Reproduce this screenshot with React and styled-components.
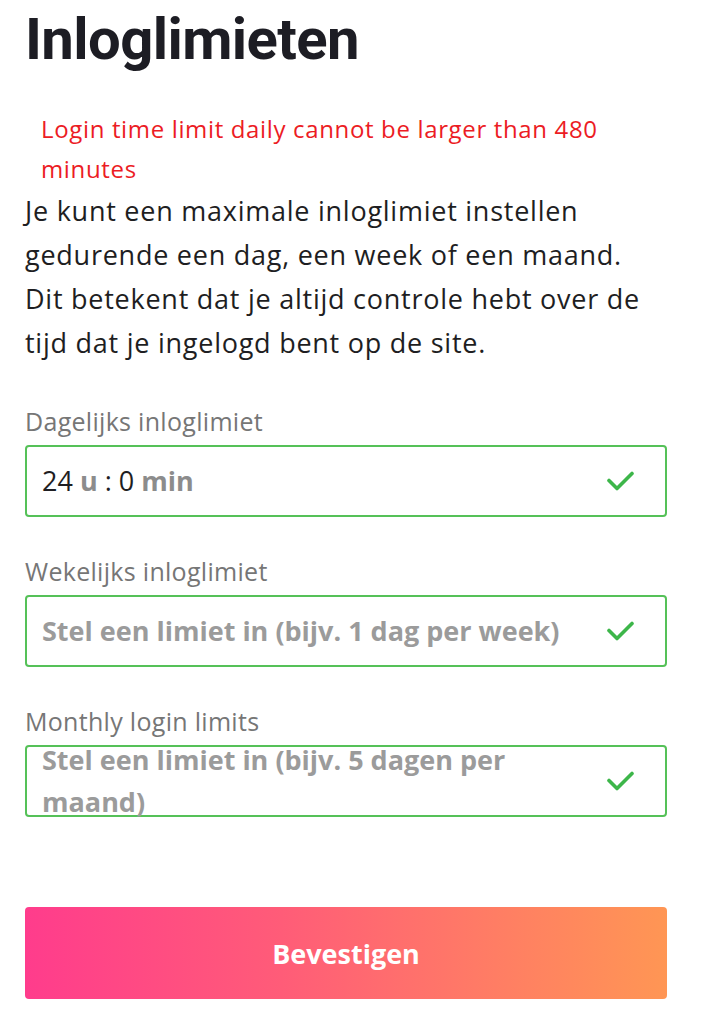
import React from "react";
import styled, { createGlobalStyle } from "styled-components";

const Global = createGlobalStyle`
  html, body { margin: 0; padding: 0; background: #ffffff; }
  body { font-family: "Open Sans", "Liberation Sans", sans-serif; }
`;

const Page = styled.main`
  width: 642px;
  padding: 4px 0 0 25px;
  display: flex;
  flex-direction: column;
`;

const Title = styled.h1`
  margin: 0;
  font-family: Roboto, "Liberation Sans", sans-serif;
  font-weight: 700;
  font-size: 58px;
  line-height: 71px;
  letter-spacing: -0.6px;
  color: #1d1d24;
`;

const ErrorText = styled.p`
  margin: 34px 0 0;
  padding: 0 14px 0 16px;
  font-size: 24px;
  line-height: 40px;
  letter-spacing: 0.65px;
  color: #ec1c24;
`;

const Intro = styled.p`
  margin: 0;
  font-size: 27px;
  line-height: 44px;
  letter-spacing: 0.75px;
  color: #1e1e22;
`;

const Fields = styled.div`
  margin-top: 40px;
  display: flex;
  flex-direction: column;
  gap: 38px;
`;

const Field = styled.label`
  display: flex;
  flex-direction: column;
  gap: 8px;
`;

const Label = styled.span`
  font-size: 25px;
  line-height: 32px;
  letter-spacing: 0.3px;
  color: #767676;
`;

const InputBox = styled.div`
  box-sizing: border-box;
  height: 72px;
  border: 2px solid #55c158;
  border-radius: 4px;
  display: flex;
  align-items: center;
  gap: 18px;
  padding: 0 31px 0 15px;
`;

const Value = styled.div`
  flex: 1;
  font-size: 27px;
  line-height: 42px;
  color: ${(p) => (p.$placeholder ? "#9b9b9b" : "#1e1e22")};
  font-weight: ${(p) => (p.$placeholder ? 700 : 400)};
`;

const Unit = styled.span`
  color: #8c8c8c;
  font-weight: 700;
`;

const Button = styled.button`
  margin-top: 90px;
  height: 92px;
  border: none;
  border-radius: 4px;
  background: linear-gradient(90deg, #ff3c8c 0%, #ff5c78 40%, #ff7a66 70%, #ff9654 100%);
  color: #ffffff;
  font-family: "Open Sans", "Liberation Sans", sans-serif;
  font-weight: 700;
  font-size: 27px;
  cursor: pointer;
`;

const Check = () => (
  <svg width="27" height="20" viewBox="0 0 27 20" fill="none" aria-hidden="true">
    <path
      d="M2 9.5 L10 17.5 L25 2.5"
      stroke="#3db64a"
      strokeWidth="3.6"
      strokeLinecap="round"
      strokeLinejoin="round"
    />
  </svg>
);

export default function App() {
  return (
    <>
      <Global />
      <Page>
        <Title>Inloglimieten</Title>
        <ErrorText>Login time limit daily cannot be larger than 480 minutes</ErrorText>
        <Intro>
          Je kunt een maximale inloglimiet instellen gedurende een dag, een week of een
          maand. Dit betekent dat je altijd controle hebt over de tijd dat je ingelogd
          bent op de site.
        </Intro>
        <Fields>
          <Field>
            <Label>Dagelijks inloglimiet</Label>
            <InputBox>
              <Value>
                24 <Unit>u</Unit> : 0 <Unit>min</Unit>
              </Value>
              <Check />
            </InputBox>
          </Field>
          <Field>
            <Label>Wekelijks inloglimiet</Label>
            <InputBox>
              <Value $placeholder>Stel een limiet in (bijv. 1 dag per week)</Value>
              <Check />
            </InputBox>
          </Field>
          <Field>
            <Label>Monthly login limits</Label>
            <InputBox>
              <Value $placeholder>Stel een limiet in (bijv. 5 dagen per maand)</Value>
              <Check />
            </InputBox>
          </Field>
        </Fields>
        <Button type="button">Bevestigen</Button>
      </Page>
    </>
  );
}
